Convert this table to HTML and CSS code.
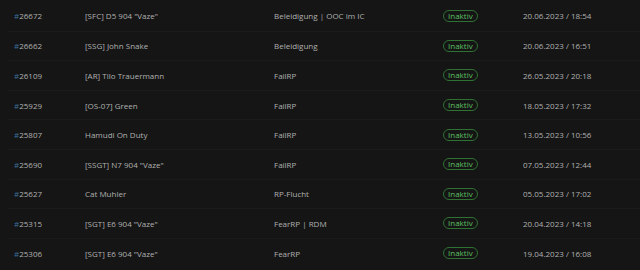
FILE: index.html
```html
<!DOCTYPE html>
<html lang="de">
<head>
    <meta charset="UTF-8">
    <title>Akten</title>
    <link rel="stylesheet" href="styles.css">
</head>
<body>

<div class="records">
    <div class="row">
        <span class="id"><span class="hash">#</span>26672</span>
        <span class="name">[SFC] D5 904 "Vaze"</span>
        <span class="reason">Beleidigung | OOC im IC</span>
        <span class="state"><span class="badge">Inaktiv</span></span>
        <span class="date">20.06.2023 / 18:54</span>
    </div>
    <div class="row">
        <span class="id"><span class="hash">#</span>26662</span>
        <span class="name">[SSG] John Snake</span>
        <span class="reason">Beleidigung</span>
        <span class="state"><span class="badge">Inaktiv</span></span>
        <span class="date">20.06.2023 / 16:51</span>
    </div>
    <div class="row">
        <span class="id"><span class="hash">#</span>26109</span>
        <span class="name">[AR] Tilo Trauermann</span>
        <span class="reason">FailRP</span>
        <span class="state"><span class="badge">Inaktiv</span></span>
        <span class="date">26.05.2023 / 20:18</span>
    </div>
    <div class="row">
        <span class="id"><span class="hash">#</span>25929</span>
        <span class="name">[OS-07] Green</span>
        <span class="reason">FailRP</span>
        <span class="state"><span class="badge">Inaktiv</span></span>
        <span class="date">18.05.2023 / 17:32</span>
    </div>
    <div class="row">
        <span class="id"><span class="hash">#</span>25807</span>
        <span class="name">Hamudi On Duty</span>
        <span class="reason">FailRP</span>
        <span class="state"><span class="badge">Inaktiv</span></span>
        <span class="date">13.05.2023 / 10:56</span>
    </div>
    <div class="row">
        <span class="id"><span class="hash">#</span>25690</span>
        <span class="name">[SSGT] N7 904 "Vaze"</span>
        <span class="reason">FailRP</span>
        <span class="state"><span class="badge">Inaktiv</span></span>
        <span class="date">07.05.2023 / 12:44</span>
    </div>
    <div class="row">
        <span class="id"><span class="hash">#</span>25627</span>
        <span class="name">Cat Muhler</span>
        <span class="reason">RP-Flucht</span>
        <span class="state"><span class="badge">Inaktiv</span></span>
        <span class="date">05.05.2023 / 17:02</span>
    </div>
    <div class="row">
        <span class="id"><span class="hash">#</span>25315</span>
        <span class="name">[SGT] E6 904 "Vaze"</span>
        <span class="reason">FearRP | RDM</span>
        <span class="state"><span class="badge">Inaktiv</span></span>
        <span class="date">20.04.2023 / 14:18</span>
    </div>
    <div class="row">
        <span class="id"><span class="hash">#</span>25306</span>
        <span class="name">[SGT] E6 904 "Vaze"</span>
        <span class="reason">FearRP</span>
        <span class="state"><span class="badge">Inaktiv</span></span>
        <span class="date">19.04.2023 / 16:08</span>
    </div>
</div>

</body>
</html>
```

FILE: styles.css
```css
/* General */
body {
    margin: 0;
    background-color: #151515;
    font-family: "Open Sans", sans-serif;
    font-size: 8px;
    color: #b0b0b0;
}

/* Records list */
.records {
    padding-top: 1px;
}

.row {
    display: grid;
    grid-template-columns: 71px 189px 169px 80px 1fr;
    align-items: center;
    height: 29.6px;
    margin-left: 8px;
    padding-left: 6px;
    border-top: 1px solid #1b1b1b;
    box-sizing: border-box;
}

.row:first-child {
    border-top: none;
}

.hash {
    color: #3b6b9a;
}

/* Status badge */
.badge {
    display: inline-block;
    padding: 0 4px;
    border: 1px solid #2e7133;
    border-radius: 6px;
    color: #5cc061;
    line-height: 10px;
}
```
